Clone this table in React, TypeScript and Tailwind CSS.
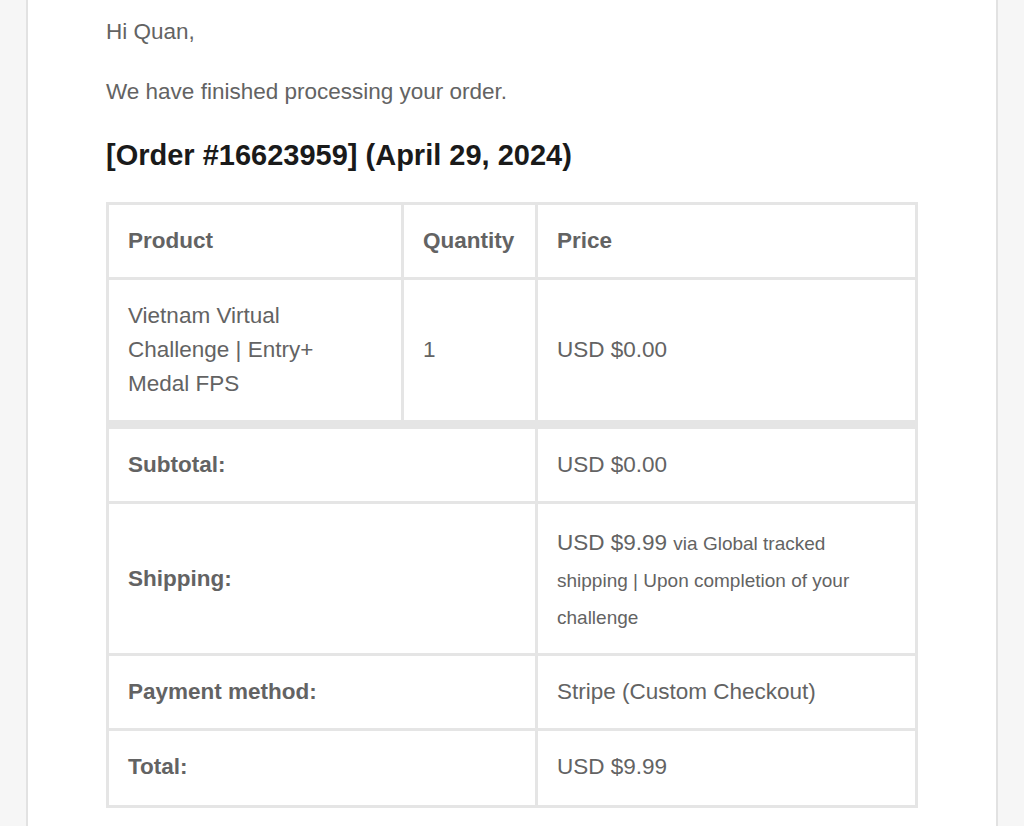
import React from "react";

const cell = "bg-white px-[19px] py-[19px] leading-[34px]";

export default function App() {
  return (
    <div
      className="h-[826px] w-[1024px] overflow-hidden bg-[#f6f6f6] text-[#636363]"
      style={{ fontFamily: '"Liberation Sans", Arial, Helvetica, sans-serif' }}
    >
      <div className="ml-[26px] h-full w-[972px] border-x-2 border-[#e2e2e2] bg-white px-[78px] pt-[15px]">
        <p className="text-[22.5px] leading-[34px]">Hi Quan,</p>
        <p className="mt-[26px] text-[22.5px] leading-[34px]">We have finished processing your order.</p>
        <h2 className="mt-[28px] text-[29px] font-bold leading-[36px] text-[#1a1a1a]">
          [Order #16623959] (April 29, 2024)
        </h2>
        <div className="mt-[29px] grid grid-cols-[292px_131px_1fr] gap-[3px] bg-[#e5e5e5] p-[3px] text-[22.5px]">
          <div className={`${cell} font-bold`}>Product</div>
          <div className={`${cell} font-bold`}>Quantity</div>
          <div className={`${cell} font-bold`}>Price</div>

          <div className={cell}>
            Vietnam Virtual
            <br />
            Challenge | Entry+
            <br />
            Medal FPS
          </div>
          <div className={`${cell} flex items-center`}>1</div>
          <div className={`${cell} flex items-center`}>USD $0.00</div>

          <div className={`${cell} col-span-2 border-t-[6px] border-[#e5e5e5] font-bold`}>Subtotal:</div>
          <div className={`${cell} border-t-[6px] border-[#e5e5e5]`}>USD $0.00</div>

          <div className={`${cell} col-span-2 flex items-center font-bold`}>Shipping:</div>
          <div className="bg-white px-[19px] pb-[17px] pt-[21px] leading-[36px]">
            USD $9.99{" "}
            <span className="text-[19px] leading-[36px]">
              via Global tracked shipping | Upon completion of your challenge
            </span>
          </div>

          <div className={`${cell} col-span-2 font-bold`}>Payment method:</div>
          <div className={cell}>Stripe (Custom Checkout)</div>

          <div className={`${cell} col-span-2 pb-[21px] font-bold`}>Total:</div>
          <div className={`${cell} pb-[21px]`}>USD $9.99</div>
        </div>
      </div>
    </div>
  );
}
